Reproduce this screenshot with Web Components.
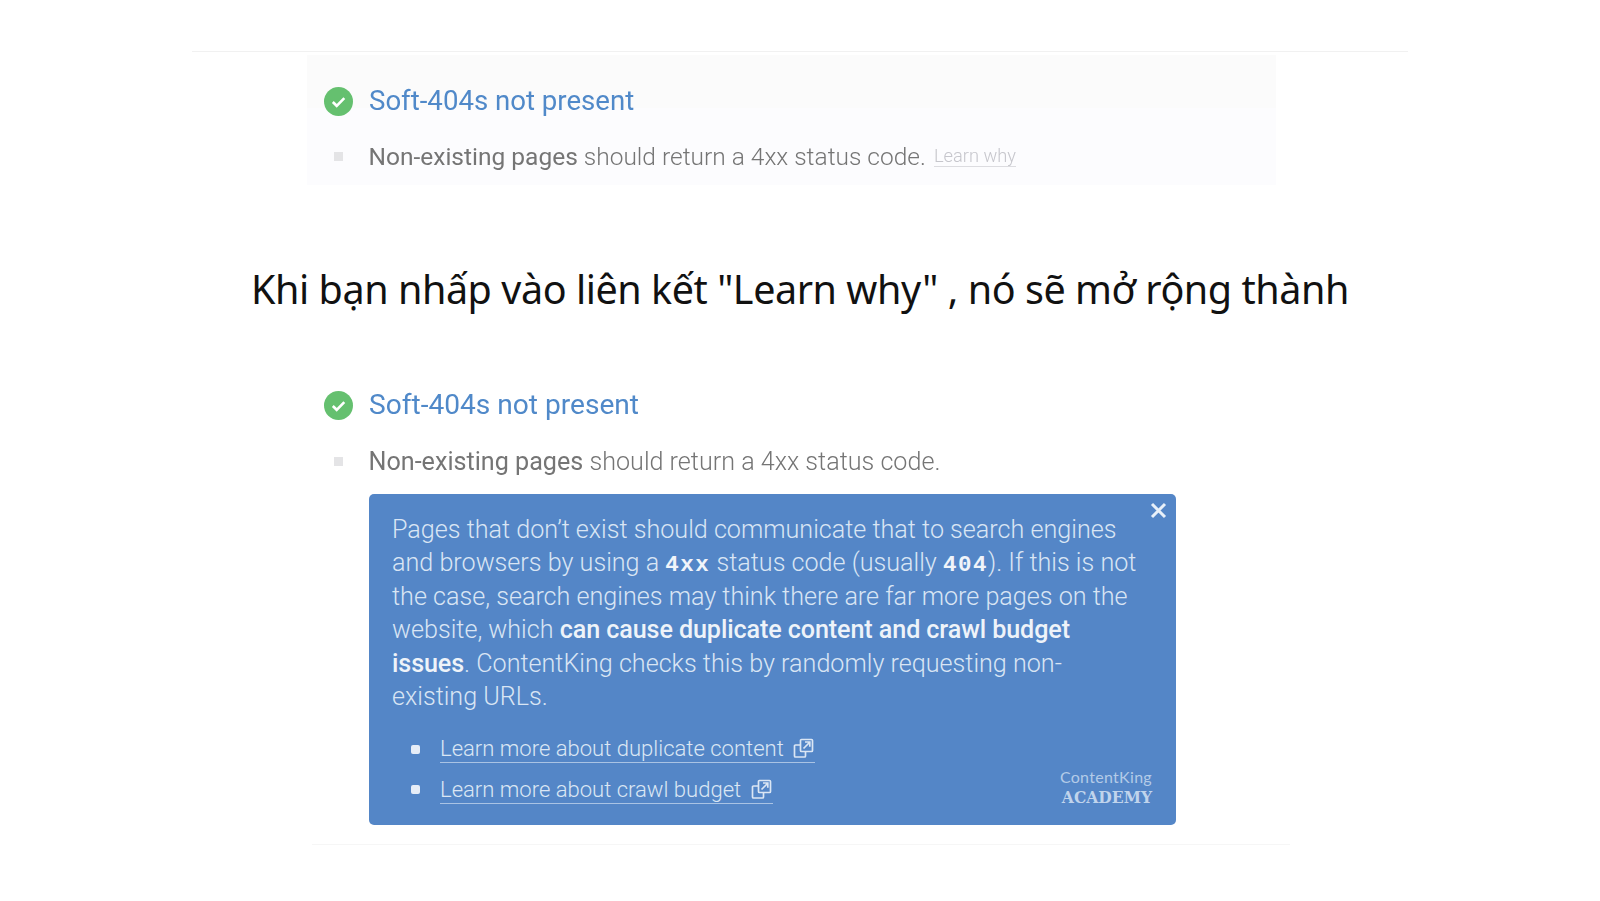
<!DOCTYPE html>
<html lang="vi">
<head>
<meta charset="utf-8">
<title>Soft-404s</title>
<style>
  html, body { margin: 0; background: #fff; }
  body { width: 1600px; height: 901px; overflow: hidden; }
</style>
</head>
<body>
<guide-page>
  <check-item slot="first" size="27.6" desc="24.5" lift="1">
    <span slot="title">Soft-404s not present</span>
    <span><b>Non-existing pages</b> should return a 4xx status code.</span>
    <a slot="more">Learn why</a>
  </check-item>
  <span slot="heading">Khi bạn nhấp vào liên kết "Learn why" , nó sẽ mở rộng thành</span>
  <check-item slot="second" size="28.1" desc="25.15">
    <span slot="title">Soft-404s not present</span>
    <span><b>Non-existing pages</b> should return a 4xx status code.</span>
  </check-item>
  <academy-box slot="second-box">
    Pages that don’t exist should communicate that to search engines and browsers by using a <code>4xx</code> status code (usually <code>404</code>). If this is not the case, search engines may think there are far more pages on the website, which <strong>can cause duplicate content and crawl budget issues</strong>. ContentKing checks this by randomly requesting non-existing URLs.
    <ext-link slot="links">Learn more about duplicate content</ext-link>
    <ext-link slot="links">Learn more about crawl budget</ext-link>
  </academy-box>
</guide-page>

<script>
class GuidePage extends HTMLElement {
  constructor() {
    super();
    this.attachShadow({ mode: 'open' });
    this.shadowRoot.innerHTML = `
      <style>
        :host {
          display: block;
          box-sizing: border-box;
          height: 901px;
          padding-top: 51px;
          font-family: Roboto, sans-serif;
        }
        .top-rule { height: 1px; margin: 0 192px; background: #f1f1f1; }
        .first {
          margin: 3px 324px 0 307px;
          height: 130px;
          background: linear-gradient(#fbfbfb 53px, #fcfcfe 53px);
          filter: blur(.4px);
        }
        h1 {
          margin: 74px 0 0;
          height: 60px;
          text-align: center;
          font: 400 39.5px/60px "Noto Sans", sans-serif;
          letter-spacing: -.44px;
          color: #111;
        }
        .second { margin: 40px 0 0 307px; width: 900px; filter: blur(.4px); }
        .bottom-rule { height: 1px; margin: 19px 310px 0 312px; background: #f6f6f6; }
      </style>
      <div class="top-rule"></div>
      <div class="first"><slot name="first"></slot></div>
      <h1><slot name="heading"></slot></h1>
      <div class="second">
        <slot name="second"></slot>
        <slot name="second-box"></slot>
      </div>
      <div class="bottom-rule"></div>
    `;
  }
}

class CheckItem extends HTMLElement {
  constructor() {
    super();
    this.attachShadow({ mode: 'open' });
    this.shadowRoot.innerHTML = `
      <style>
        :host { display: block; color: #757575; }
        .head { display: flex; align-items: center; height: 92px; }
        .ok { width: 29px; height: 29px; margin: 0 16px 0 17px; flex: none; }
        .title { color: #5089c9; font-weight: 400; margin-top: -2px; }
        .desc { display: flex; align-items: center; height: 26px; margin-top: -3px; }
        .mark { width: 9px; height: 9px; margin: 0 25.5px 0 27px; background: #e4e4e6; flex: none; }
        .text { font-weight: 300; white-space: nowrap; }
        ::slotted(a) {
          margin-left: 8px;
          font-size: 18.3px;
          font-weight: 300;
          color: #c6c6cc;
          border-bottom: 1px solid #dcdce0;
          line-height: 20px;
        }
      </style>
      <div class="head">
        <svg class="ok" viewBox="0 0 29 29">
          <circle cx="14.5" cy="14.5" r="14.5" fill="#65c06f"/>
          <path d="M8.8 15l3.9 3.8 7.6-7.6" fill="none" stroke="#fff" stroke-width="2.6"/>
        </svg>
        <span class="title"><slot name="title"></slot></span>
      </div>
      <div class="desc">
        <span class="mark"></span>
        <span class="text"><slot></slot></span>
        <slot name="more"></slot>
      </div>
    `;
    const lift = parseFloat(this.getAttribute('lift') || 0);
    this.shadowRoot.querySelector('.title').style.fontSize = this.getAttribute('size') + 'px';
    this.shadowRoot.querySelector('.text').style.fontSize = this.getAttribute('desc') + 'px';
    this.shadowRoot.querySelector('.desc').style.marginTop = (-3 - lift) + 'px';
  }
}

class AcademyBox extends HTMLElement {
  constructor() {
    super();
    this.attachShadow({ mode: 'open' });
    this.shadowRoot.innerHTML = `
      <style>
        :host {
          display: block;
          position: relative;
          box-sizing: border-box;
          width: 807px;
          height: 331px;
          margin: 20px 0 0 62px;
          padding: 19px 34px 0 23px;
          background: #5486c7;
          border-radius: 5px;
          color: #d9e5f4;
          font-size: 25.15px;
          font-weight: 300;
          line-height: 33.4px;
        }
        .close { position: absolute; top: 8px; right: 9px; width: 17px; height: 17px; }
        .foot {
          display: flex;
          justify-content: space-between;
          align-items: flex-end;
          margin: 22px -34px 0 0;
          padding-right: 24px;
        }
        .links { display: flex; flex-direction: column; gap: 12.5px; padding-left: 19px; }
        .logo { display: flex; flex-direction: column; align-items: flex-end; margin-bottom: -3px; color: #b3cbe8; }
        .logo .name { font: 400 16px/19px Lato, sans-serif; letter-spacing: .3px; }
        .logo .academy {
          margin-top: 2px;
          font: 700 17.3px/19px "DejaVu Serif Condensed", "DejaVu Serif", serif;
          color: #c0d4ec;
        }
        ::slotted(strong) { font-weight: 500; color: #eef3f9; letter-spacing: -.1px; }
        ::slotted(code) { font: 700 22.5px "Liberation Mono", monospace; letter-spacing: 1.5px; color: #f0f4fa; }
      </style>
      <svg class="close" viewBox="0 0 17 17"><path d="M2 2l13 13M15 2L2 15" stroke="#e8f0f9" stroke-width="3" fill="none"/></svg>
      <div class="copy"><slot></slot></div>
      <div class="foot">
        <div class="links"><slot name="links"></slot></div>
        <div class="logo"><span class="name">ContentKing</span><span class="academy">ACADEMY</span></div>
      </div>
    `;
  }
}

class ExtLink extends HTMLElement {
  constructor() {
    super();
    this.attachShadow({ mode: 'open' });
    this.shadowRoot.innerHTML = `
      <style>
        :host { display: flex; align-items: center; font-size: 22.05px; font-weight: 300; line-height: 27px; color: #dbe6f4; }
        .bullet { width: 9px; height: 9px; margin-right: 20px; background: #e6edf7; border-radius: 2px; flex: none; }
        .label { display: flex; align-items: center; gap: 9.5px; border-bottom: 1px solid #a9c3e4; white-space: nowrap; }
        svg { width: 21px; height: 21px; margin-right: 1px; flex: none; }
      </style>
      <span class="bullet"></span>
      <span class="label">
        <span><slot></slot></span>
        <svg viewBox="0 0 21 21" fill="none" stroke="#dbe6f4" stroke-width="1.7">
          <rect x="7.5" y="1.5" width="12" height="12" rx="1"/>
          <path d="M7 7H2.5a1 1 0 0 0-1 1v10a1 1 0 0 0 1 1h9a1 1 0 0 0 1-1v-4"/>
          <path d="M10.5 10.5l6-6M12 4h4.8v4.8"/>
        </svg>
      </span>
    `;
  }
}

customElements.define('guide-page', GuidePage);
customElements.define('check-item', CheckItem);
customElements.define('academy-box', AcademyBox);
customElements.define('ext-link', ExtLink);
</script>
</body>
</html>
